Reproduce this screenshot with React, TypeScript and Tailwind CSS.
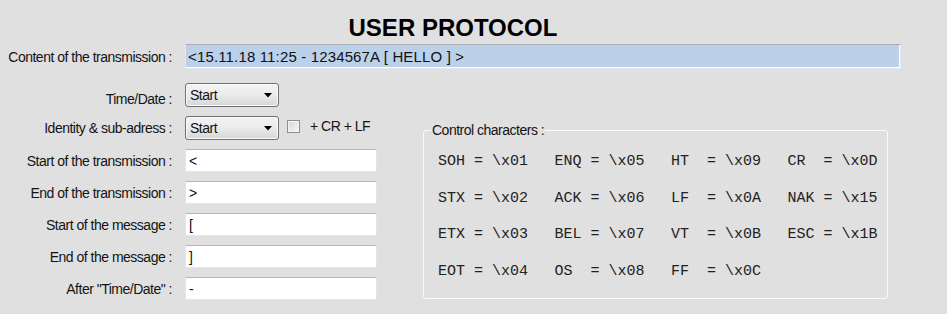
const rows = [
  { label: 'Start of the transmission :', value: '<' },
  { label: 'End of the transmission :', value: '>' },
  { label: 'Start of the message :', value: '[' },
  { label: 'End of the message :', value: ']' },
  { label: 'After "Time/Date" :', value: '-' },
];

const controlChars = [
  ['SOH = \\x01', 'ENQ = \\x05', 'HT  = \\x09', 'CR  = \\x0D'],
  ['STX = \\x02', 'ACK = \\x06', 'LF  = \\x0A', 'NAK = \\x15'],
  ['ETX = \\x03', 'BEL = \\x07', 'VT  = \\x0B', 'ESC = \\x1B'],
  ['EOT = \\x04', 'OS  = \\x08', 'FF  = \\x0C', ''],
];

function Label({ children, className }: { children: React.ReactNode; className?: string }) {
  return (
    <div className={cn('w-[172px] shrink-0 text-right text-[14px] leading-[16px] tracking-[-0.5px] text-[#141414] whitespace-nowrap', className)}>
      {children}
    </div>
  );
}

function Combo({ value }: { value: string }) {
  return (
    <div className="ml-[13px] w-[94px] h-[24px] rounded-[3px] border border-[#707070] bg-gradient-to-b from-[#f3f3f3] via-[#ebebeb] to-[#d6d6d6] shadow-[inset_0_0_0_1px_#fbfbfb] flex items-center pl-[4px] pr-[6px]">
      <span className="flex-1 text-[14px] leading-[16px] tracking-[-0.5px] text-[#111]">{value}</span>
      <svg width="8" height="5" viewBox="0 0 8 5">
        <path d="M0 0 H8 L4 4.5 Z" fill="#000" />
      </svg>
    </div>
  );
}

function TextBox({ value }: { value: string }) {
  return (
    <div className="ml-[13px] w-[192px] h-[23px] rounded-[2px] border border-[#e2e6ec] border-t-[#b3b5ba] bg-white flex items-center pl-[3px] text-[14px] leading-[16px] text-[#111]">
      {value}
    </div>
  );
}

export default function App() {
  return (
    <div className="w-[947px] h-[314px] bg-[#e0e0e0] overflow-hidden font-['Liberation_Sans',Arial,sans-serif]">
      <div className="pt-[14px] w-[906px] text-center text-[24px] leading-[28px] font-bold text-black">
        USER PROTOCOL
      </div>

      <div className="mt-[2px] flex items-center">
        <Label>Content of the transmission :</Label>
        <div className="ml-[13px] w-[716px] h-[25px] border border-[#e3e9ef] border-t-[#abadb3] bg-[#bbd1ea] shadow-[inset_-1px_-1px_0_#fff] flex items-center pl-[2px] text-[15px] leading-[17px] tracking-[0.15px] text-[#111]">
          &lt;15.11.18 11:25 - 1234567A [ HELLO ] &gt;
        </div>
      </div>

      <div className="mt-[14px] flex">
        <div className="w-[377px] flex flex-col gap-[9px]">
          <div className="flex items-center">
            <Label className="pt-[8px]">Time/Date :</Label>
            <Combo value="Start" />
          </div>
          <div className="flex items-center">
            <Label>Identity &amp; sub-adress :</Label>
            <Combo value="Start" />
            <div className="self-start mt-[2px] ml-[8px] flex items-center">
              <div className="w-[13px] h-[13px] border border-[#8e8f8f] bg-gradient-to-br from-[#d8d8d8] to-[#f7f7f7] shadow-[inset_0_0_0_1px_#f4f4f4]" />
              <span className="ml-[10px] text-[14px] leading-[16px] tracking-[-0.5px] text-[#141414]">+ CR + LF</span>
            </div>
          </div>
          {rows.map((r) => (
            <div key={r.label} className="flex items-center">
              <Label>{r.label}</Label>
              <TextBox value={r.value} />
            </div>
          ))}
        </div>

        <div className="relative mt-[47px] ml-[46px] w-[465px] h-[169px] rounded-[3px] border border-[#fbfbfb] pt-[13px] pl-[14px]">
          <span className="absolute left-[7px] top-[-9px] px-[1px] bg-[#e0e0e0] text-[14px] leading-[16px] tracking-[-0.5px] text-[#141414]">
            Control characters :
          </span>
          <div className="grid grid-cols-[repeat(4,116.5px)] font-['Liberation_Mono','Courier_New',monospace] text-[15px] leading-[36.5px] text-[#222] whitespace-pre">
            {controlChars.flat().map((c, i) => (
              <span key={i}>{c}</span>
            ))}
          </div>
        </div>
      </div>
    </div>
  );
}

function cn(...classes: (string | boolean | undefined)[]) {
  return classes.filter(Boolean).join(' ');
}
